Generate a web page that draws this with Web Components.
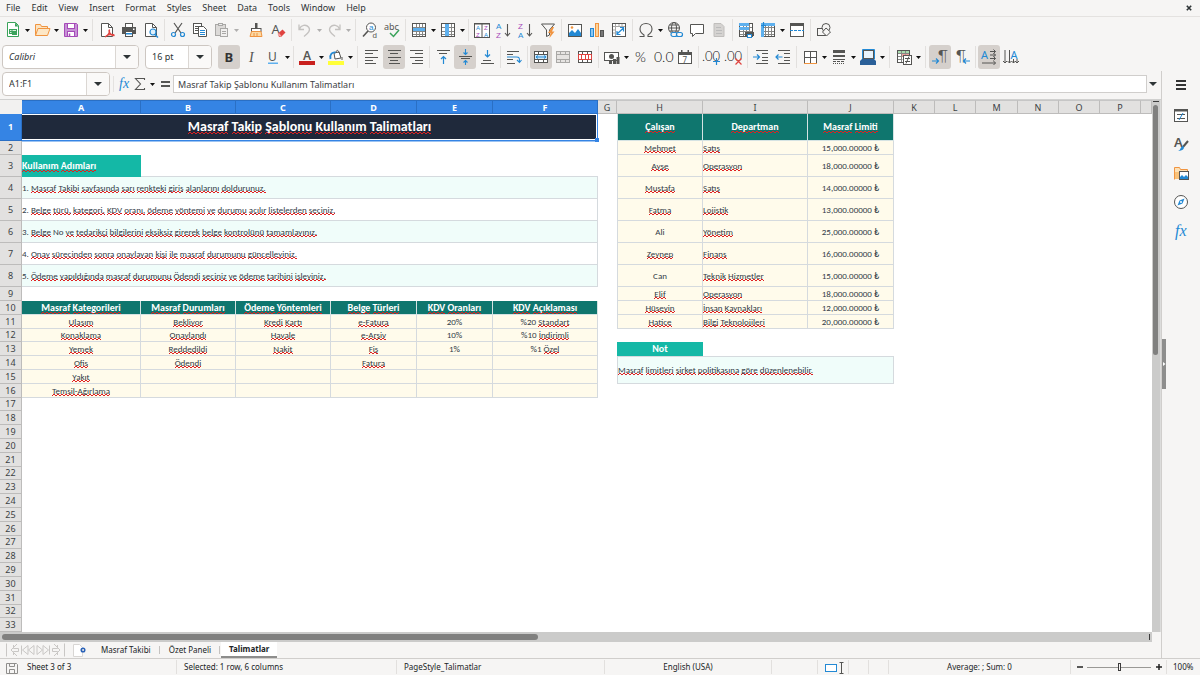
<!DOCTYPE html>
<html lang="tr">
<head>
<meta charset="utf-8">
<title>Masraf Takip Şablonu</title>
<style>
html, body { margin: 0; height: 100%; }
body { background: #f6f5f4; color: #2e3436; font: 9px/12px "Noto Sans", sans-serif; overflow: hidden; }
</style>
</head>
<body>
<calc-app></calc-app>

<template id="calc-app">
  <style>
    :host { display: flex; flex-direction: column; height: 100vh; }
    .body { display: flex; flex: 1; min-height: 0; }
    .work { display: flex; flex-direction: column; flex: 1; min-width: 0; }
    .grid { display: flex; flex: 1; min-height: 0; }
    calc-sheet { flex: 1; min-width: 0; }
  </style>
  <menu-bar>
    <a href="#file">File</a><a href="#edit">Edit</a><a href="#view">View</a><a href="#insert">Insert</a><a href="#format">Format</a><a href="#styles">Styles</a><a href="#sheet">Sheet</a><a href="#data">Data</a><a href="#tools">Tools</a><a href="#window">Window</a><a href="#help">Help</a>
  </menu-bar>
  <tool-bar label="Standard">
    <tool-button icon="new" label="New" menu></tool-button>
    <tool-button icon="open" label="Open" menu></tool-button>
    <tool-button icon="save" label="Save" menu></tool-button>
    <tool-sep wide></tool-sep>
    <tool-button icon="pdf" label="Export as PDF"></tool-button>
    <tool-button icon="print" label="Print"></tool-button>
    <tool-button icon="preview" label="Print preview"></tool-button>
    <tool-sep></tool-sep>
    <tool-button icon="cut" label="Cut"></tool-button>
    <tool-button icon="copy" label="Copy"></tool-button>
    <tool-button icon="paste" label="Paste" menu disabled></tool-button>
    <tool-sep blank></tool-sep>
    <tool-button icon="clone" label="Clone formatting"></tool-button>
    <tool-button icon="clear" label="Clear formatting"></tool-button>
    <tool-sep></tool-sep>
    <tool-button icon="undo" label="Undo" menu disabled></tool-button>
    <tool-button icon="redo" label="Redo" menu disabled></tool-button>
    <tool-sep wide></tool-sep>
    <tool-button icon="find" label="Find and replace"></tool-button>
    <tool-button icon="spell" label="Spelling"></tool-button>
    <tool-sep></tool-sep>
    <tool-button icon="row" label="Row" menu></tool-button>
    <tool-button icon="column" label="Column" menu></tool-button>
    <tool-sep></tool-sep>
    <tool-button icon="sort" label="Sort"></tool-button>
    <tool-button icon="asc" label="Sort ascending"></tool-button>
    <tool-button icon="desc" label="Sort descending"></tool-button>
    <tool-button icon="filter" label="AutoFilter"></tool-button>
    <tool-sep></tool-sep>
    <tool-button icon="image" label="Insert image"></tool-button>
    <tool-button icon="chart" label="Insert chart"></tool-button>
    <tool-button icon="pivot" label="Pivot table"></tool-button>
    <tool-sep></tool-sep>
    <tool-button icon="omega" label="Special character" menu></tool-button>
    <tool-button icon="link" label="Hyperlink"></tool-button>
    <tool-button icon="comment" label="Comment"></tool-button>
    <tool-button icon="header" label="Headers and footers" disabled></tool-button>
    <tool-sep></tool-sep>
    <tool-button icon="printarea" label="Define print area"></tool-button>
    <tool-button icon="freeze" label="Freeze rows and columns" menu></tool-button>
    <tool-button icon="split" label="Split window"></tool-button>
    <tool-sep></tool-sep>
    <tool-button icon="shapes" label="Show draw functions"></tool-button>
  </tool-bar>
  <tool-bar label="Formatting">
    <combo-box label="Font name" value="Calibri" kind="font"></combo-box>
    <combo-box label="Font size" value="16 pt" kind="size"></combo-box>
    <tool-button icon="bold" label="Bold" pressed></tool-button>
    <tool-button icon="italic" label="Italic"></tool-button>
    <tool-button icon="underline" label="Underline" menu></tool-button>
    <tool-sep></tool-sep>
    <tool-button icon="fontcolor" label="Font color" menu></tool-button>
    <tool-button icon="fill" label="Background color" menu></tool-button>
    <tool-sep wide></tool-sep>
    <tool-button icon="left" label="Align left"></tool-button>
    <tool-button icon="center" label="Center horizontally" pressed></tool-button>
    <tool-button icon="right" label="Align right"></tool-button>
    <tool-sep></tool-sep>
    <tool-button icon="vtop" label="Align top"></tool-button>
    <tool-button icon="vmid" label="Center vertically" pressed></tool-button>
    <tool-button icon="vbot" label="Align bottom"></tool-button>
    <tool-sep></tool-sep>
    <tool-button icon="wrap" label="Wrap text"></tool-button>
    <tool-sep></tool-sep>
    <tool-button icon="merge" label="Merge and center cells" pressed></tool-button>
    <tool-button icon="mergecells" label="Merge cells" disabled></tool-button>
    <tool-button icon="unmerge" label="Unmerge cells"></tool-button>
    <tool-sep></tool-sep>
    <tool-button icon="currency" label="Format as currency" menu></tool-button>
    <tool-button icon="percent" label="Format as percent"></tool-button>
    <tool-button icon="number" label="Format as number"></tool-button>
    <tool-button icon="date" label="Format as date"></tool-button>
    <tool-sep></tool-sep>
    <tool-button icon="decadd" label="Add decimal place"></tool-button>
    <tool-button icon="decdel" label="Delete decimal place"></tool-button>
    <tool-sep></tool-sep>
    <tool-button icon="indent" label="Increase indent"></tool-button>
    <tool-button icon="outdent" label="Decrease indent"></tool-button>
    <tool-sep></tool-sep>
    <tool-button icon="borders" label="Borders" menu></tool-button>
    <tool-button icon="bstyle" label="Border style" menu></tool-button>
    <tool-button icon="bcolor" label="Border color" menu></tool-button>
    <tool-sep wide></tool-sep>
    <tool-button icon="cond" label="Conditional formatting" menu></tool-button>
    <tool-sep wide></tool-sep>
    <tool-button icon="ltr" label="Left-to-right" pressed></tool-button>
    <tool-button icon="rtl" label="Right-to-left"></tool-button>
    <tool-sep></tool-sep>
    <tool-button icon="texth" label="Text direction left to right" pressed></tool-button>
    <tool-button icon="textv" label="Text direction top to bottom"></tool-button>
  </tool-bar>
  <div class="body">
    <div class="work">
      <formula-bar></formula-bar>
      <div class="grid"><calc-sheet></calc-sheet><scroll-track axis="y"></scroll-track></div>
      <scroll-track axis="x"></scroll-track>
      <sheet-tabs>
        <button role="tab">Masraf Takibi</button>
        <button role="tab">Özet Paneli</button>
        <button role="tab" aria-selected="true">Talimatlar</button>
      </sheet-tabs>
    </div>
    <side-bar></side-bar>
  </div>
  <status-bar></status-bar>
</template>

<template id="menu-bar">
  <style>
    :host { display: flex; align-items: center; height: 16px; border-bottom: 1px solid #e4e2e0; padding-right: 6px; }
    nav { display: flex; gap: 11px; padding-left: 6px; flex: 1; }
    ::slotted(a) { color: inherit; text-decoration: none; }
    button { border: 0; background: none; padding: 0; width: 10px; height: 12px; display: grid; place-items: center; }
  </style>
  <nav aria-label="Menu"><slot></slot></nav>
  <button aria-label="Close document"><svg width="6" height="6" viewBox="0 0 6 6"><path d="M.8.8l4.4 4.4M5.2.8L.8 5.2" stroke="#2e3436" stroke-width="1.6"/></svg></button>
</template>

<template id="tool-bar">
  <style>
    :host { display: flex; align-items: flex-start; box-sizing: border-box; height: 27px; padding: 1px 0 0 2px; }
  </style>
  <slot></slot>
</template>

<template id="tool-sep">
  <style>
    :host { display: block; flex: none; width: 1px; height: 22px; margin: 1px 2px; background: #e2e0de; }
    :host([wide]) { margin: 1px 3px; }
    :host([blank]) { background: none; }
  </style>
</template>

<template id="tool-button">
  <style>
    :host { display: flex; flex: none; align-items: center; }
    button { border: 0; padding: 0; background: none; display: grid; place-items: center; }
    .main { width: 22px; height: 24px; border-radius: 3px; }
    :host([pressed]) .main { background: #d5d0cc; }
    .menu { width: 7px; height: 24px; }
    :host([disabled]) .menu { opacity: .3; }
    :host(:not([menu])) .menu { display: none; }
  </style>
  <button class="main"><ui-icon></ui-icon></button>
  <button class="menu" aria-label="More options"><svg width="5" height="4" viewBox="0 0 5 4"><path d="M0 1h5L2.500 4z" fill="#111"/></svg></button>
</template>

<template id="combo-box">
  <style>
    :host { display: flex; flex: none; position: relative; box-sizing: border-box; height: 24px; width: 137px; margin: 0 6px 0 0; border: 1px solid #cdc7c2; border-radius: 4px; background: #fff; overflow: hidden; }
    :host([kind=size]) { width: 67px; }
    :host([kind=name]) { width: 108px; margin-right: 3px; }
    select { appearance: none; border: 0; background: none; color: #2e3436; font: 9px/14px "Noto Sans", sans-serif; padding: 0 24px 0 6px; width: 100%; }
    :host([kind=font]) select { font-style: italic; }
    .arrow { position: absolute; right: 0; top: 0; bottom: 0; width: 22px; border-left: 1px solid #dbd7d3; background: #faf9f8; display: grid; place-items: center; pointer-events: none; }
  </style>
  <select></select>
  <span class="arrow"><svg width="8" height="6" viewBox="0 0 8 6"><path d="M0 1h8L4 5z" fill="#2e3436"/></svg></span>
</template>

<template id="formula-bar">
  <style>
    :host { display: flex; align-items: center; height: 26px; padding: 0 3px 2px 2px; border-bottom: 1px solid #d0d0cf; }
    button { border: 0; background: none; padding: 0; display: grid; place-items: center; }
    .tools { display: flex; align-items: center; border-left: 1px solid #e4e2e0; padding-left: 2px; }
    .list { width: 9px; }
    input { flex: 1; min-width: 0; box-sizing: border-box; height: 18px; border: 1px solid #d0cecc; background: #fff; padding: 0 4px; font: 9px/14px "Noto Sans", sans-serif; color: #3c4144; }
    .expand { width: 11px; height: 18px; }
  </style>
  <combo-box label="Name box" value="A1:F1" kind="name"></combo-box>
  <div class="tools">
    <button aria-label="Function wizard"><ui-icon name="fx"></ui-icon></button>
    <button aria-label="Select function"><ui-icon name="sigma"></ui-icon></button>
    <button class="list" aria-label="Function list"><svg width="5" height="4" viewBox="0 0 5 4"><path d="M0 1h5L2.500 4z" fill="#111"/></svg></button>
    <button aria-label="Formula"><ui-icon name="equals"></ui-icon></button>
  </div>
  <input aria-label="Formula input" value="Masraf Takip Şablonu Kullanım Talimatları">
  <button class="expand" aria-label="Expand formula bar"><svg width="8" height="6" viewBox="0 0 8 6"><path d="M0 1h8L4 5z" fill="#2e3436"/></svg></button>
</template>

<template id="calc-sheet">
  <style>
    :host { display: block; background: #fff; overflow: hidden; }
    table { table-layout: fixed; width: 100%; border-collapse: separate; border-spacing: 0; line-height: 12px; }
    th, td { box-sizing: border-box; padding: 0; overflow: hidden; white-space: nowrap; text-align: center; font-weight: 400; }
    thead tr { height: 14px; }
    tbody tr { height: 14px; }
    tbody tr.first { height: 27px; }
    tbody tr.tall { height: 22px; }
    tbody tr.short { height: 13px; }
    thead th, th.row { background: #e2e1e0; color: #3c4144; border: 0 solid #bdbcbb; border-width: 0 1px 1px 0; font-size: 9px; }
    thead th { border-top: 1px solid #c6c6c6; line-height: 11px; }
    thead th.corner { background: #f2f1f0; border-color: #f2f1f0; }
    thead th.on, th.row.on { background: #3584e4; color: #fff; font-weight: 700; border-color: #2a6fc4; }
    td { font-family: Carlito, Lato, sans-serif; font-size: 9px; color: #323c48; }
    td.box { border: 0 solid #d5dade; border-width: 0 1px 1px 0; }
    td.leftedge { border-left-width: 1px; }
    td.topedge { border-top: 1px solid #d5dade; }
    td.under { border-bottom: 1px solid #d5dade; }
    td.title { position: relative; overflow: visible; background: #1f293b; color: #fff; font-weight: 700; font-size: 14px; line-height: 20px; border: 0 solid #3584e4; border-width: 0 1px 1px 0; box-shadow: inset 0 1px #fff, inset -1px -1px #fff, 0 1px #9cc3f2; }
    td.title i { position: absolute; right: -2px; bottom: -2px; width: 4px; height: 4px; background: #3584e4; }
    td.head { background: #0f766e; color: #fff; font-weight: 700; font-size: 10px; border-color: #d5e3e3; }
    td.label { background: #14b8a6; color: #fff; font-weight: 700; font-size: 10px; text-align: left; }
    td.note-label { background: #14b8a6; color: #fff; font-weight: 700; font-size: 10px; }
    td.mint { background: #f0fdfa; text-align: left; }
    td.white { background: #fff; }
    td.cream { background: #fffbeb; }
    td.dept { text-align: left; }
    u { text-decoration: none; background: url("data:image/svg+xml,%3Csvg xmlns='http://www.w3.org/2000/svg' width='4' height='2'%3E%3Cpath d='M0 2L2 0L4 2' fill='none' stroke='%23e02020' stroke-width='1'/%3E%3C/svg%3E") 0 100% / 4px 2px repeat-x; }
    td.title u { background-position: 0 90%; }
  </style>
  <table><colgroup></colgroup><thead></thead><tbody></tbody></table>
</template>

<template id="scroll-track">
  <style>
    :host { display: flex; flex: none; box-sizing: border-box; background: #cbcbca; }
    :host([axis=y]) { flex-direction: column; width: 9px; border-right: 1px solid #dcdcdb; }
    :host([axis=x]) { height: 10px; margin-right: 9px; }
    .thumb { background: #80807f; border-radius: 3px; }
    .cap { background: #3c3c3c; }
    :host([axis=y]) .cap { order: -1; height: 1px; margin: 1px 1px 3px; }
    :host([axis=y]) .thumb { height: 47%; margin: 0 2px 0 1px; }
    :host([axis=x]) .thumb { width: 46.5%; margin: 2px 0 2px 2px; }
    :host([axis=x]) .cap { width: 1px; margin: 2px 2px 2px auto; }
  </style>
  <div class="thumb"></div><div class="cap"></div>
</template>

<template id="sheet-tabs">
  <style>
    :host { display: flex; flex: none; height: 16px; align-items: stretch; padding-left: 5px; }
    button { border: 0; background: none; padding: 0; display: grid; place-items: center; width: 15px; }
    .add { margin: 0 5px 0 6px; width: 16px; }
    ::slotted(button) { border: 0; background: linear-gradient(#c4c2c0, #c4c2c0) right / 1px 8px no-repeat; padding: 0 9px; font: 8px/14px "Noto Sans", sans-serif; color: #202426; }
    ::slotted([aria-selected]) { background: #fff; font-weight: 700; border-bottom: 2px solid #8d8d8c; padding: 0 8px; margin-left: 1px; }
    [role=tablist] { display: flex; }
  </style>
  <button aria-label="First sheet"><ui-icon name="first"></ui-icon></button>
  <button aria-label="Previous sheet"><ui-icon name="prev"></ui-icon></button>
  <button aria-label="Next sheet"><ui-icon name="next"></ui-icon></button>
  <button aria-label="Last sheet"><ui-icon name="last"></ui-icon></button>
  <button class="add" aria-label="Add sheet"><ui-icon name="addsheet"></ui-icon></button>
  <div role="tablist" aria-label="Sheets"><slot></slot></div>
</template>

<template id="side-bar">
  <style>
    :host { display: flex; position: relative; flex: none; flex-direction: column; align-items: center; box-sizing: border-box; width: 39px; border-left: 1px solid #d0cecc; padding: 2px 0 0; gap: 5px; }
    button { border: 0; background: none; padding: 0; width: 24px; height: 24px; display: grid; place-items: center; }
    .menu { margin-bottom: 1px; }
    .grip { position: absolute; left: 0; top: 268px; width: 4px; height: 50px; background: #8e8e8d; }
  </style>
  <button class="menu" aria-label="Sidebar settings"><ui-icon name="burger"></ui-icon></button>
  <button aria-label="Properties"><ui-icon name="props"></ui-icon></button>
  <button aria-label="Styles"><ui-icon name="styles"></ui-icon></button>
  <button aria-label="Gallery"><ui-icon name="gallery"></ui-icon></button>
  <button aria-label="Navigator"><ui-icon name="navigator"></ui-icon></button>
  <button aria-label="Functions"><ui-icon name="fxlarge"></ui-icon></button>
  <button class="grip" aria-label="Hide sidebar"><svg width="4" height="6" viewBox="0 0 4 6"><path d="M1 1l2.500 2L1 5z" fill="#fff"/></svg></button>
</template>

<template id="status-bar">
  <style>
    :host { display: grid; flex: none; height: 16px; border-top: 1px solid #d0cecc; align-items: center; font-size: 8px; color: #202426;
      grid-template-columns: 20px 157fr 220fr 208fr 167fr 46px 31px 20px 20px 182fr 96px 33px; }
    :host > * { box-sizing: border-box; height: 14px; line-height: 14px; border-right: 1px solid #e2e0de; padding-left: 7px; white-space: nowrap; overflow: hidden; }
    :host > :last-child { border-right: 0; padding-left: 6px; }
    .mid { text-align: center; padding: 0; }
    .icon { display: grid; place-items: center; padding: 0; }
    .icon.save { padding-left: 4px; border: 0; }
    .zoom { display: flex; align-items: center; gap: 3px; padding: 0 3px 0 4px; }
    .zoom button { border: 0; background: none; padding: 0; width: 9px; height: 10px; flex: none; display: grid; place-items: center; }
    input { appearance: none; flex: 1; min-width: 0; margin: 0; height: 10px; background: linear-gradient(#9a9996, #9a9996) center / 100% 1px no-repeat; }
    input::-webkit-slider-thumb { appearance: none; box-sizing: border-box; width: 3px; height: 8px; background: #f6f5f4; border: 1px solid #3c3c3c; }
  </style>
  <span class="icon save"><ui-icon name="docsave"></ui-icon></span>
  <span>Sheet 3 of 3</span>
  <span>Selected: 1 row, 6 columns</span>
  <span>PageStyle_Talimatlar</span>
  <span class="mid">English (USA)</span>
  <span></span>
  <span class="icon"><ui-icon name="selmode"></ui-icon></span>
  <span></span>
  <span></span>
  <span class="mid">Average: ; Sum: 0</span>
  <div class="zoom">
    <button aria-label="Zoom out"><svg width="8" height="8" viewBox="0 0 8 8"><path d="M1 4h6" stroke="#222" stroke-width="1.500"/></svg></button>
    <input type="range" min="0" max="100" value="50" aria-label="Zoom">
    <button aria-label="Zoom in"><svg width="8" height="8" viewBox="0 0 8 8"><path d="M1 4h6M4 1v6" stroke="#222" stroke-width="1.500"/></svg></button>
  </div>
  <span>100%</span>
</template>

<script>
const K = '#555553', B = '#2389d4', O = '#f09440', G = '#3aa35a', P = '#a64ab8', R = '#e0433f', L = '#a9a8a6';
const line = (d, c = K, w = 1) => `<path d="${d}" fill="none" stroke="${c}" stroke-width="${w}"/>`;
const fill = (d, c) => `<path d="${d}" fill="${c}"/>`;
const box = (x, y, w, h, f = '#fff', s = K) => `<rect x="${x}" y="${y}" width="${w}" height="${h}" fill="${f}" stroke="${s}"/>`;
const txt = (s, x, y, size, c = K, extra = '') => `<text x="${x}" y="${y}" font-size="${size}" fill="${c}" ${extra}>${s}</text>`;
const page = (s = K) => `<path d="M2.500 1.500h7l4 4v9h-11z" fill="#fff" stroke="${s}"/><path d="M9.500 1.500v4h4" fill="none" stroke="${s}"/>`;
const mesh = () => line('M1.500 5.500h13M1.500 9.500h13M1.500 12.500h13M5.500 1.500v13M8.500 1.500v13M11.500 1.500v13', '#868684') + line('M1.500 1.500h13v13h-13z');
const rowsGrid = c => line('M1.500 2.500h13v11h-13zM1.500 5.500h13M1.500 10.500h13M5.500 2.500v3M10.500 2.500v3M5.500 10.500v3M10.500 10.500v3', c);
const serif = 'font-family="Liberation Serif" font-style="italic"';
const light = 'font-family="Lato" font-weight="300"';
const sans = 'font-family="Liberation Sans"';

const ICONS = {
  new: `<path d="M2.500.5h8l3 3v11h-11z" fill="#fff" stroke="${G}"/>` + fill('M10 .5v4h3.500z', G) + box(4.5, 7.5, 7, 4, '#d9f0de', G) + line('M4.500 9.500h7M7 7.500v4', G) + fill('M7 10h5v3H7z', G),
  open: `<path d="M1.500 13.500v-11h5l1 2h6v3" fill="#fbe3c0" stroke="${O}"/><path d="M1.500 13.500l2.500-7h12l-2.500 7z" fill="#fde7c6" stroke="${O}"/>`,
  save: `<path d="M1.500 1.500h12l1 1v12h-13z" fill="#c792d6" stroke="${P}"/>` + box(4.5, 1.5, 7, 5, '#fff', P) + box(4.5, 9.5, 7, 5, '#fff', P) + line('M6.500 11.500v3', P, 1.5),
  pdf: page() + line('M6 15c3-1 5-5 4.500-7c-1-.5-.8 5 4.500 5.500c1-1.500-6-2-9 1.500', R, 1.3),
  print: box(4.5, 1.5, 7, 4) + fill('M1 5h14v7H1z', K) + box(4.5, 9.5, 7, 5) + fill('M5 11h6v1.500H5z', B) + fill('M12 6.500h1.500v1.500H12z', '#fff'),
  preview: page() + `<circle cx="10" cy="10" r="3" fill="#dff0fb" stroke="${B}" stroke-width="1.200"/>` + line('M12 12.500l3 3', B, 1.5),
  cut: line('M4 1l7 10M12 1L5 11', K, 1.2) + `<circle cx="3.500" cy="12.500" r="2" fill="none" stroke="${B}" stroke-width="1.200"/><circle cx="12.500" cy="12.500" r="2" fill="none" stroke="${B}" stroke-width="1.200"/>`,
  copy: box(1.5, 1.5, 8, 10) + line('M3 4.500h5M3 6.500h5M3 8.500h3') + `<path d="M6.500 4.500h5l3 3v7h-8z" fill="#fff" stroke="${K}"/>` + line('M8 8.500h5M8 10.500h5M8 12.500h5', B),
  paste: box(1.5, 2.5, 10, 11, '#dcdad8', L) + box(4.5, 1.5, 4, 2, '#eee', L) + box(6.5, 6.5, 7, 8, '#f1f0ef', L) + line('M8 9.500h4M8 11.500h4', L),
  clone: fill('M7 1h2.500v6H7z', K) + box(3.5, 6.5, 9.5, 3, '#fff', K) + `<path d="M3.500 9.500h9.500l1 5h-12z" fill="#fbd9a5" stroke="${O}"/>` + line('M6 11v3M9 11v3', O),
  clear: txt('A', 1.5, 11.5, 13, K) + `<path d="M8 11.500l4.500-4 3 3-4.500 4.500h-2z" fill="${R}"/>` + fill('M7.500 12l1.500-1 2.500 3-1.500 1z', '#f4a3a1'),
  undo: line('M2 2.500v5h5M2.500 7C4 3 9 2 11.500 5c2.500 3 0 6-4.500 9.500', '#c4c2c0', 1.3),
  redo: line('M14 2.500v5H9M13.500 7C12 3 7 2 4.500 5C2 8 4.500 11 9 14.500', '#c4c2c0', 1.3),
  find: `<circle cx="9" cy="5.500" r="4.500" fill="#fff" stroke="${K}"/>` + line('M6 9l-5 5.500', K, 1.6) + txt('a', 7, 8, 8, B, sans) + txt('d', 10.5, 16, 8, K, sans),
  spell: txt('abc', 0, 7.5, 9, K) + line('M6 11l3.500 3.500L15 8', G, 1.5),
  row: box(1.5, 1.5, 13, 13) + mesh() + fill('M2 6h12v3H2z', '#5eb0ee'),
  column: box(1.5, 1.5, 13, 13) + mesh() + fill('M5 2h4v12H5z', '#5eb0ee'),
  sort: box(.5, 1.5, 15, 14) + line('M8 1.500v14') + fill('M0 1h16v1.500H0z', K) + txt('A', 2, 8, 6, B, sans) + txt('Z', 2, 15, 6, P, sans) + txt('Z', 10, 8, 6, P, sans) + txt('A', 10, 15, 6, B, sans),
  asc: txt('A', 0, 6.5, 8, B, sans) + txt('Z', 0, 15.500, 8, P, sans) + line('M11.500 2v12M9 11l2.500 3 2.500-3', K, 1.1),
  desc: txt('Z', 0, 6.5, 8, P, sans) + txt('A', 0, 15.500, 8, B, sans) + line('M11.500 2v12M9 11l2.500 3 2.500-3', K, 1.1),
  filter: line('M1.500 2h13L9.500 8v5l-3 1.500V8z', K) + fill('M12 5l-4 6h2.500l-1 5 5-6.500H12l2-4.500z', O),
  image: box(1.5, 2.5, 13, 12) + fill('M2 14v-3l3-3 3 3 3-4 3 4v3z', B) + `<circle cx="5" cy="5.500" r="1.300" fill="${O}"/>`,
  chart: box(1.5, 6.5, 3, 8, '#8cc7f2', B) + box(6.500, 1.500, 3, 13, '#fcd49b', O) + box(11.500, 8.500, 3, 6, '#777', K),
  pivot: box(1.5, 1.5, 13, 13) + line('M1.500 4.500h13M4.500 1.500v13M8 1.500v3M11 1.500v3M1.500 8h3M1.500 11h3', L) + box(1.5, 1.5, 13, 13, 'none') + line('M6 12l6.500-6M9 5.500h3.500v4M9.500 12.500H6V9', B, 1.2),
  omega: line('M1.500 14.500h4.500v-1.500C3.500 11.500 2 9.500 2 7C2 3.500 4.700 1.500 8 1.500s6 2 6 5.500c0 2.500-1.500 4.500-4 6v1.500h4.500', K, 1.1),
  link: `<g fill="none" stroke="${K}"><circle cx="7" cy="6" r="5.500"/><ellipse cx="7" cy="6" rx="2.500" ry="5.500"/><path d="M1.500 6h11M2.500 3h9M2.500 9h9"/></g><g fill="#f6f5f4" stroke="${B}" stroke-width="1.200"><rect x="4" y="10.500" width="6" height="4" rx="2"/><rect x="9.500" y="10.500" width="6" height="4" rx="2"/></g>`,
  comment: `<path d="M1.500 2.500h13v9h-8l-3 3v-3h-2z" fill="#fff" stroke="${K}"/>`,
  header: `<path d="M3 1.500h7l3 3v10H3z" fill="#d5d3d1" stroke="#c0bebc"/>` + line('M5 5.500h5M5 8.500h6M5 11.500h6', '#bbb'),
  printarea: box(1.5, 1.5, 13, 13) + mesh() + fill('M1 1h10v3H1zM1 5h10v3H1z', '#5eb0ee') + fill('M7 10h9v4H7z', K) + box(9.5, 12.500, 4, 3, '#fff', B),
  freeze: box(1.5, 1.5, 13, 13) + mesh() + fill('M1 1h14v3H1zM1 1h3v14H1z', '#5eb0ee') + line('M3.500 0v6M1 3.500h5', B, 1.2),
  split: box(1.5, 3.5, 13, 11) + fill('M1 1h14v3H1z', K) + `<path d="M1 8.500h14" stroke="${B}" stroke-dasharray="3 1"/>`,
  shapes: `<g fill="#f6f5f4" stroke="${K}"><rect x="1.500" y="6.500" width="8" height="7"/><circle cx="10" cy="5.500" r="4"/><path d="M10 6l4.500 4-4 4-4-4z"/></g>`,
  bold: txt('B', 3.5, 13, 13, '#333', 'font-weight="700"'),
  italic: txt('I', 6, 13, 14, K, serif),
  underline: txt('U', 3, 11.5, 12, K) + fill('M3 13.500h10v1.500H3z', '#5eb0ee'),
  fontcolor: txt('A', 4, 10.5, 12, K, 'font-weight="600"') + fill('M0 12h16v4H0z', '#c9211e'),
  fill: `<path d="M6 4l5-1 2 6-6 1z" fill="#fff" stroke="${K}"/>` + line('M8 4c0-4 3-3 3 0M14 8v3', K) + line('M2.500 10c-1-5 2-7 5-6.500', B, 1.8) + fill('M0 12h16v4H0z', '#ffff38'),
  left: line('M1 1.500h13M1 4.500h8M1 8.500h13M1 11.500h8M1 14.500h11'),
  center: line('M2 1.500h13M4 4.500h8M2 8.500h13M4 11.500h8M3 14.500h11'),
  right: line('M2 1.500h13M7 4.500h8M2 8.500h13M7 11.500h8M4 14.500h11'),
  vtop: line('M2 1.500h13M4 4.500h8') + line('M8.500 15V8M6 10l2.500-2.500L11 10', B, 1.2),
  vmid: line('M2 7.500h13M4 9.500h9') + line('M8.500 0v5M6.500 3.500l2 2 2-2M8.500 16v-4.500M6.500 13.500l2-2 2 2', B, 1.1),
  vbot: line('M4 11.500h8M2 14.500h13') + line('M8.500 1v7M6 5.500L8.500 8 11 5.500', B, 1.2),
  wrap: line('M1 2.500h12M1 5.500h6M1 10.500h6M1 14.500h8') + line('M1 8h9.500c3 0 3 1 3 5M11 11l2.500 2.500L15.500 11', B, 1.1),
  merge: box(1.5, 2.5, 13, 11) + rowsGrid(K) + fill('M2 6h12v4H2z', '#cfe8fa') + line('M3 8h10M5 6.500L3 8l2 1.500M11 6.500L13 8l-2 1.500', B),
  mergecells: box(1.5, 2.5, 13, 11, '#e6e4e2', L) + rowsGrid(L),
  unmerge: box(1.5, 2.5, 13, 11) + rowsGrid(K) + line('M1.500 5.500h13v5h-13zM4.500 5.500v5M8.500 5.500v5M11.500 5.500v5', R),
  currency: box(.5, 3.5, 14, 8, '#fff', K) + `<circle cx="7.500" cy="7.500" r="2.500" fill="${K}"/>` + fill('M5 11h3v4H5zM9 10h3v5H9zM12.500 8h3v7h-3z', K),
  percent: txt('%', 2, 13, 14, '#111', light),
  number: txt('0.0', -1, 13, 14, '#111', light),
  date: box(1.5, 3.5, 13, 11) + fill('M1 3h14v3H1zM4 1h1.500v3H4zM10.500 1H12v3h-1.500z', K) + txt('7', 5.500, 13.500, 8, K),
  decadd: txt('.00', -2, 12, 13, '#111', light) + line('M12.500 9v7M9 12.500h7', B, 1.2),
  decdel: txt('.00', -2, 12, 13, '#111', light) + line('M9.500 9.500l6 6M15.500 9.500l-6 6', R, 1.2),
  indent: line('M3 1.500h12M9 4.500h6M9 8.500h6M9 11.500h6M3 14.500h12') + line('M0 8h6.500M4 5.500L6.500 8 4 10.500', B, 1.2),
  outdent: line('M3 1.500h12M9 4.500h6M9 8.500h6M9 11.500h6M3 14.500h12') + line('M1 8h6.500M3.500 5.500L1 8l2.500 2.500', B, 1.2),
  borders: box(2.5, 2.5, 12, 12) + line('M8.500 2.500v12M2.500 8.500h12') + line('M2 14.500h13', O),
  bstyle: fill('M2 1h12v3H2zM2 6h12v2H2z', K) + line('M2 10.500h12') + `<path d="M2 12.500h12" stroke="${K}" stroke-dasharray="3 1"/><path d="M2 14.500h12" stroke="${K}" stroke-dasharray="1 1"/>`,
  bcolor: box(3.5, 1.5, 10, 8, '#e8f3fc', K) + line('M2.500 10V.5h12V10', B) + fill('M0 12l2-2h12l2 2v4H0z', '#2a6099'),
  cond: box(1.5, 1.5, 12, 12) + fill('M2 1h11v3H2z', '#a8dcae') + fill('M5 4h8v4H5z', '#f3a2a0') + line('M1.500 4.500h12M1.500 7.500h5M1.500 10.500h5M5.500 1.500v12M9.500 1.500v4', '#868684') + box(1.5, 1.5, 12, 12, 'none') + box(7.500, 6.500, 8, 9) + line('M9 9.500h5M9 12.500h5M13 7.500l-3 7'),
  ltr: txt('¶', 6, 12, 15, K, light) + line('M0 12h6M4 9.500L6.500 12 4 14.500', B, 1.2),
  rtl: txt('¶', 2, 12, 15, K, light) + line('M9 12h7M12 9.500L9.500 12l2.500 2.500', B, 1.2),
  texth: txt('A', 0, 10, 11, B) + line('M9 2.500h5.500M9 6h5.500M9 9.500h5.500M1 14h13.500M12.500.5l2 2-2 2M12.500 4l2 2-2 2M12.500 7.500l2 2-2 2M12.500 12l2 2-2 2'),
  textv: txt('A', 7.500, 10, 11, B) + line('M2 1v13M6.500 1v13M10.500 10v4M14 10v4M0 12l2 2 2-2M4.500 12l2 2 2-2M8.500 12l2 2 2-2M12 12l2 2 2-2'),
  fx: txt('fx', 3, 12, 14, B, serif),
  fxlarge: txt('fx', 2, 13, 16, B, serif),
  sigma: line('M12.500 4V2.500h-9l5 5.500-5 5.500h9V12', K, 1.1),
  equals: fill('M4 5h9v2H4zM4 9h9v2H4z', K),
  first: line('M1.500 1.500v13M12 2L6 8l6 6M8.500 3v3.500h5v3h-5V13', '#c9c7c5'),
  prev: line('M8 3.500L2.500 8 8 12.500zM14 3.500L8.500 8l5.500 4.500zM1.500 3.500v9', '#c9c7c5'),
  next: line('M2 3.500L7.500 8 2 12.500zM8 3.500l5.500 4.500L8 12.500zM14.500 3.500v9', '#c9c7c5'),
  last: line('M14.500 1.500v13M4 2l6 6-6 6M7.500 3v3.500h-5v3h5V13', '#c9c7c5'),
  addsheet: `<path d="M2.500 2.500h6l3 3v9h-9z" fill="#fff" stroke="#d8d6d4"/><circle cx="12" cy="8" r="1.800" fill="none" stroke="#2a62b8" stroke-width="1.500"/>`,
  burger: fill('M3 3h10v2H3zM3 7h10v2H3zM3 11h10v2H3z', '#333'),
  props: box(1.5, 2.5, 13, 12) + fill('M1 2h14v2.500H1z', K) + line('M4 7.500h8M4 11.500h8', K) + line('M10 6L6 13', B),
  styles: txt('A', 1, 11, 13, K, 'font-weight="600"') + line('M15 5l-5 6', K, 2) + fill('M10 10c2 1 1 5-5 5 3-1 2-4 5-5z', B),
  gallery: `<path d="M1.500 14.500v-12h5l1 2h7v3" fill="#fde0b5" stroke="${O}"/>` + fill('M2 7h5v7H2z', '#f9c27a') + box(6.5, 6.5, 9, 8) + fill('M7 14v-2l2-2 2 2 2-2 2 2v2z', B),
  navigator: `<circle cx="8" cy="8" r="6.500" fill="#fff" stroke="${K}"/>` + fill('M11.500 4.500L9.500 9.500l-5 2L6.500 6.500z', B) + `<circle cx="8" cy="8" r="1" fill="#fff"/>`,
  docsave: line('M2.500 3.500h10l1 1v9h-11zM5.500 3.500v3h5v-3M5.500 13.500v-4h5v4', '#8f8e8c'),
  selmode: `<rect x="0.500" y="4.500" width="11" height="7" fill="#fff" stroke="${B}"/>` + line('M16.500 3v10M14.500 2.500h4M14.500 13.500h4', K)
};

function define(name, setup) {
  customElements.define(name, class extends HTMLElement {
    connectedCallback() {
      if (this.shadowRoot) return;
      const root = this.attachShadow({ mode: 'open' });
      root.append(document.getElementById(name).content.cloneNode(true));
      if (setup) setup(this, root);
    }
  });
}

customElements.define('ui-icon', class extends HTMLElement {
  static observedAttributes = ['name'];
  constructor() { super(); this.attachShadow({ mode: 'open' }); }
  attributeChangedCallback(_, __, name) {
    this.shadowRoot.innerHTML = `<style>:host{display:block;width:16px;height:16px;font-family:"Noto Sans",sans-serif}svg{display:block;overflow:visible}</style>
      <svg width="16" height="16" viewBox="0 0 16 16" aria-hidden="true">${ICONS[name] || ''}</svg>`;
  }
});

define('tool-sep');
define('tool-button', (host, root) => {
  root.querySelector('ui-icon').setAttribute('name', host.getAttribute('icon'));
  const main = root.querySelector('.main');
  main.setAttribute('aria-label', host.getAttribute('label'));
  main.disabled = host.hasAttribute('disabled');
  if (host.hasAttribute('pressed')) main.setAttribute('aria-pressed', 'true');
});
define('combo-box', (host, root) => {
  const select = root.querySelector('select');
  select.setAttribute('aria-label', host.getAttribute('label'));
  select.add(new Option(host.getAttribute('value')));
});
define('tool-bar', (host) => {
  host.setAttribute('role', 'toolbar');
  host.setAttribute('aria-label', host.getAttribute('label'));
});
define('menu-bar');
define('formula-bar');
define('scroll-track');
define('sheet-tabs');
define('side-bar');
define('status-bar');

const COLUMNS = [['A', 119], ['B', 95], ['C', 95], ['D', 86], ['E', 76], ['F', 105], ['G', 19], ['H', 86], ['I', 105], ['J', 86], ['K', 41], ['L', 41], ['M', 42], ['N', 41], ['O', 41], ['P', 41], ['', 0]];
const MERGES = { A1: [6, 1], A4: [6, 1], A5: [6, 1], A6: [6, 1], A7: [6, 1], A8: [6, 1], H14: [3, 2] };
const STYLES = [
  ['A1:A1', 'title'], ['A3:A3', 'label'], ['B3:F3', 'under'], ['A4:A8', 'box mint'], ['A5:A5', 'white'], ['A7:A7', 'white'], ['A10:F10', 'box head'], ['A11:F16', 'box cream'],
  ['H1:J1', 'box head'], ['H2:J11', 'box cream'], ['I2:I11', 'dept'], ['H1:H11', 'leftedge'], ['H13:H13', 'note-label'], ['H14:H14', 'box mint leftedge topedge']
];
const BLOCKS = {
  A1: [['Masraf Takip Şablonu Kullanım Talimatları']],
  A3: [['Kullanım Adımları'],
    ['1. Masraf Takibi sayfasında sarı renkteki giriş alanlarını doldurunuz.'],
    ['2. Belge türü, kategori, KDV oranı, ödeme yöntemi ve durumu açılır listelerden seçiniz.'],
    ['3. Belge No ve tedarikçi bilgilerini eksiksiz girerek belge kontrolünü tamamlayınız.'],
    ['4. Onay sürecinden sonra onaylayan kişi ile masraf durumunu güncelleyiniz.'],
    ['5. Ödeme yapıldığında masraf durumunu Ödendi seçiniz ve ödeme tarihini işleyiniz.']],
  A10: [['Masraf Kategorileri', 'Masraf Durumları', 'Ödeme Yöntemleri', 'Belge Türleri', 'KDV Oranları', 'KDV Açıklaması'],
    ['Ulaşım', 'Bekliyor', 'Kredi Kartı', 'e-Fatura', '20%', '%20 Standart'],
    ['Konaklama', 'Onaylandı', 'Havale', 'e-Arşiv', '10%', '%10 İndirimli'],
    ['Yemek', 'Reddedildi', 'Nakit', 'Fiş', '1%', '%1 Özel'],
    ['Ofis', 'Ödendi', '', 'Fatura'], ['Yakıt'], ['Temsil-Ağırlama']],
  H1: [['Çalışan', 'Departman', 'Masraf Limiti'],
    ['Mehmet', 'Satış', '15,000.00000 ₺'], ['Ayşe', 'Operasyon', '18,000.00000 ₺'], ['Mustafa', 'Satış', '14,000.00000 ₺'],
    ['Fatma', 'Lojistik', '13,000.00000 ₺'], ['Ali', 'Yönetim', '25,000.00000 ₺'], ['Zeynep', 'Finans', '16,000.00000 ₺'],
    ['Can', 'Teknik Hizmetler', '15,000.00000 ₺'], ['Elif', 'Operasyon', '18,000.00000 ₺'],
    ['Hüseyin', 'İnsan Kaynakları', '12,000.00000 ₺'], ['Hatice', 'Bilgi Teknolojileri', '20,000.00000 ₺']],
  H13: [['Not'], ['Masraf limitleri şirket politikasına göre düzenlenebilir.']]
};
const KNOWN = new Set(['Ali', 'Can', 'No', 'Not']);
const at = ref => [ref.charCodeAt(0) - 65, +ref.slice(1)];
const markSpelling = text => text.split(' ').map(w => /\p{L}/u.test(w) && !KNOWN.has(w) ? `<u>${w}</u>` : w).join(' ');

define('calc-sheet', (host, root) => {
  const values = {};
  for (const [start, rows] of Object.entries(BLOCKS)) {
    const [c0, r0] = at(start);
    rows.forEach((row, r) => row.forEach((v, c) => values[`${c0 + c},${r0 + r}`] = v));
  }
  const covered = new Set();
  root.querySelector('colgroup').innerHTML = '<col style="width:22px">' + COLUMNS.map(([, w]) => w ? `<col style="width:${w}px">` : '<col>').join('');
  root.querySelector('thead').innerHTML = '<tr><th class="corner"></th>' + COLUMNS.map(([n], i) => `<th scope="col" class="${i < 6 ? 'on' : ''}">${n}</th>`).join('') + '</tr>';
  let html = '';
  for (let r = 1; r <= 33; r++) {
    const size = r === 1 ? 'first' : r >= 3 && r <= 8 ? 'tall' : r > 8 && (r - 8) % 5 === 4 ? 'short' : '';
    html += `<tr class="${size}"><th scope="row" class="row ${r === 1 ? 'on' : ''}">${r}</th>`;
    for (let c = 0; c < COLUMNS.length; c++) {
      if (covered.has(`${c},${r}`)) continue;
      const [w, h] = MERGES[COLUMNS[c][0] + r] || [1, 1];
      for (let y = 0; y < h; y++) for (let x = 0; x < w; x++) covered.add(`${c + x},${r + y}`);
      const cls = STYLES.filter(([range]) => {
        const [a, b] = range.split(':').map(at);
        return c >= a[0] && c <= b[0] && r >= a[1] && r <= b[1];
      }).map(s => s[1]).join(' ');
      html += `<td class="${cls}"${w > 1 ? ` colspan="${w}"` : ''}${h > 1 ? ` rowspan="${h}"` : ''}>${markSpelling(values[`${c},${r}`] || '')}${cls === 'title' ? '<i></i>' : ''}</td>`;
    }
    html += '</tr>';
  }
  root.querySelector('tbody').innerHTML = html;
});

define('calc-app');
</script>
</body>
</html>
